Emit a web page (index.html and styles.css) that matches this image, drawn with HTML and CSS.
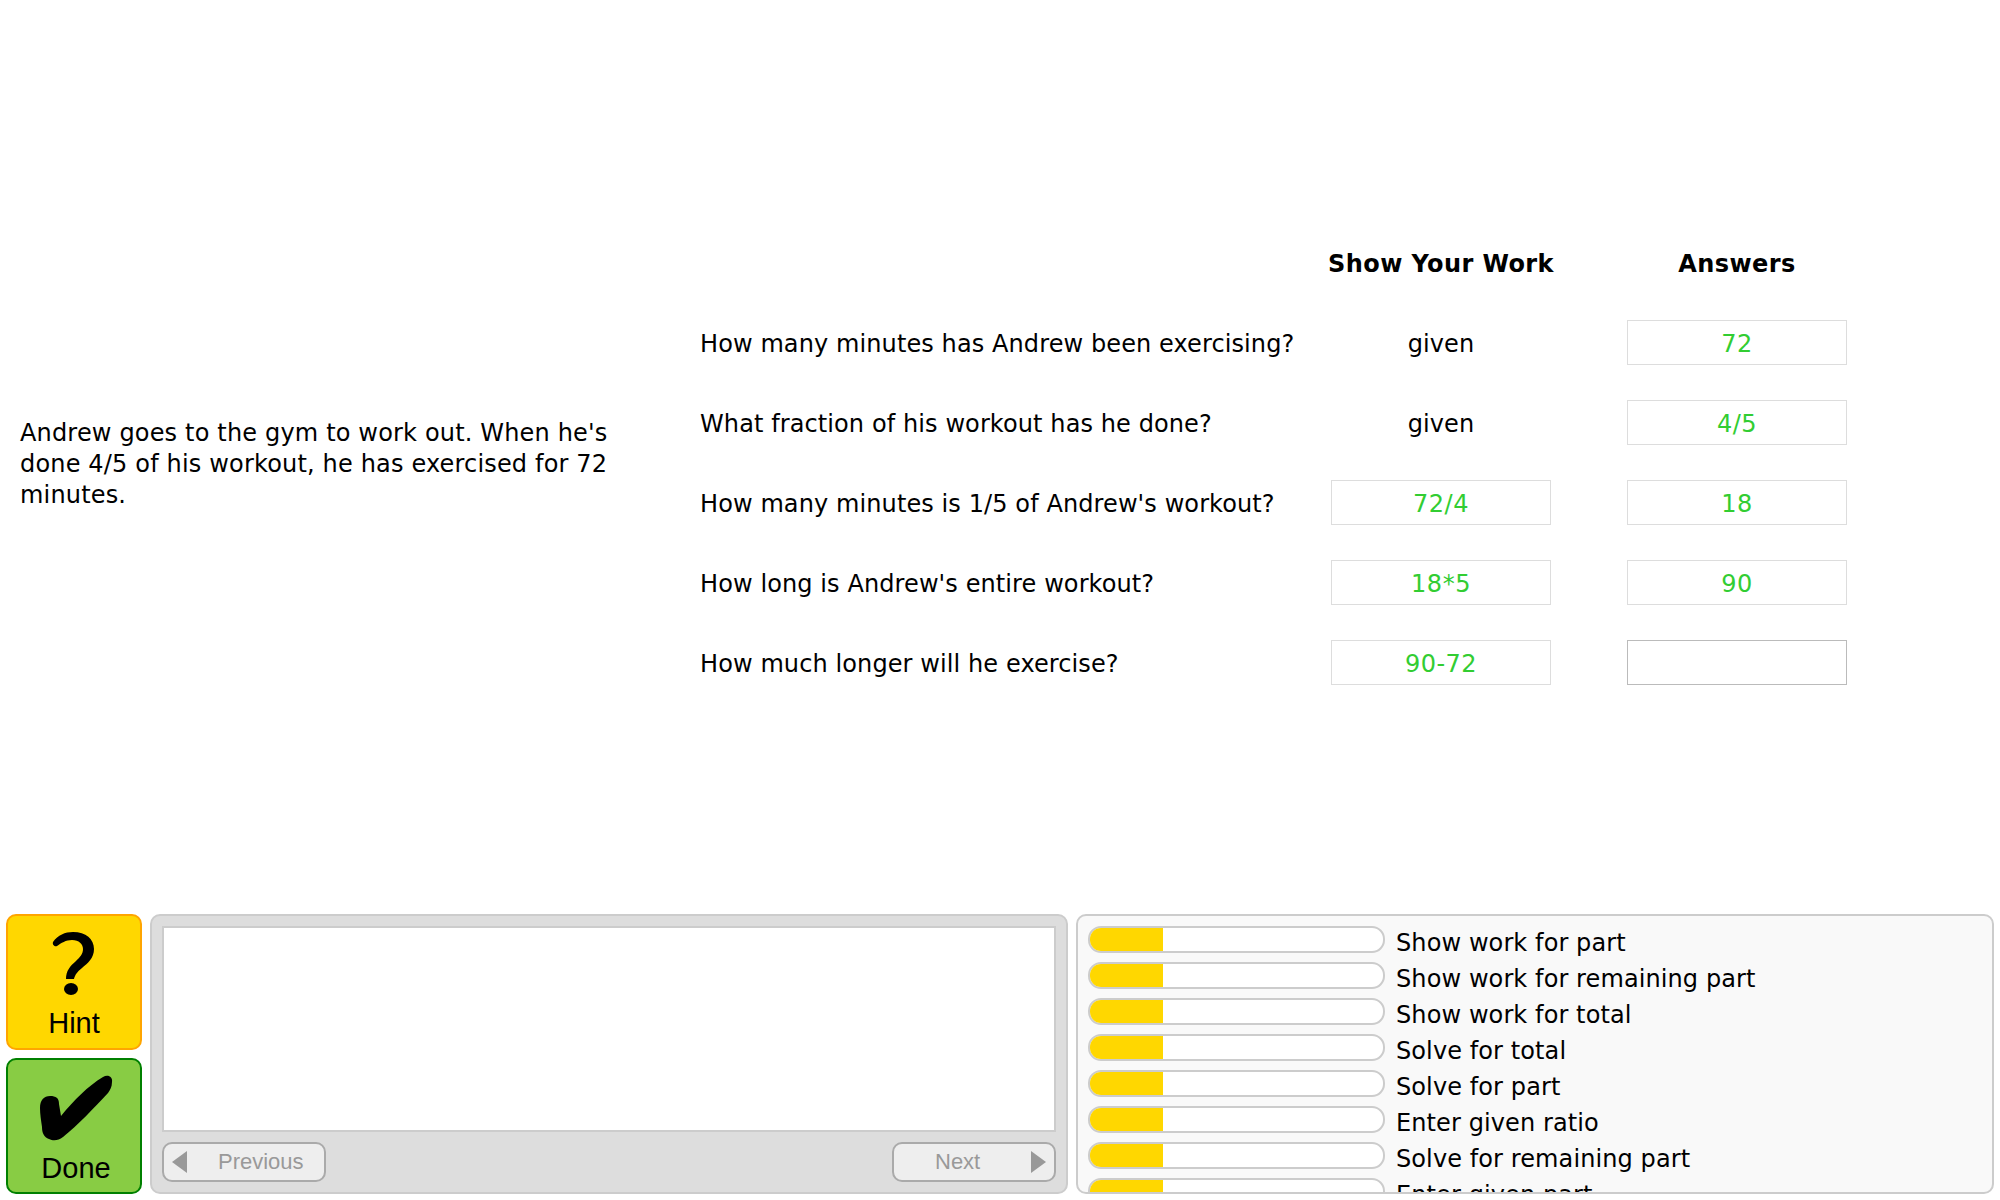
FILE: index.html
```html
<!DOCTYPE html>
<html lang="en">
<head>
    <meta charset="UTF-8">
    <title>Andrew at the gym</title>
    <link rel="stylesheet" href="styles.css">
</head>
<body>
    <div id="container">
        <div id="worksheet">
            <p id="problem">Andrew goes to the gym to work out. When he's done 4/5 of his workout, he has exercised for 72 minutes.</p>
            <div id="steps">
                <div></div>
                <div class="head">Show Your Work</div>
                <div class="head">Answers</div>

                <div class="question">How many minutes has Andrew been exercising?</div>
                <div class="given">given</div>
                <div class="box">72</div>

                <div class="question">What fraction of his workout has he done?</div>
                <div class="given">given</div>
                <div class="box">4/5</div>

                <div class="question">How many minutes is 1/5 of Andrew's workout?</div>
                <div class="box">72/4</div>
                <div class="box">18</div>

                <div class="question">How long is Andrew's entire workout?</div>
                <div class="box">18*5</div>
                <div class="box">90</div>

                <div class="question">How much longer will he exercise?</div>
                <div class="box">90-72</div>
                <div class="box empty"></div>
            </div>
        </div>

        <div id="tools">
            <div id="actions">
                <div class="action hint">
                    <svg width="136" height="90" viewBox="0 0 136 90">
                        <path d="M47 26 C52 19 59 16 67 16 C80 16 88 23 88 33 C88 42 82 47 76 52 C71 56 69 59 68 63 L60 63 C60 55 64 50 70 45 C74 41 77 38 77 33 C77 28 73 24 66 24 C60 24 55 27 51 30 C49 31 46 29 47 26 Z" fill="#000"/>
                        <ellipse cx="65" cy="73" rx="7" ry="6" fill="#000"/>
                    </svg>
                    <span>Hint</span>
                </div>
                <div class="action done">
                    <svg width="136" height="90" viewBox="0 0 136 90">
                        <path d="M34 48 C34 40 38 36 44 36 C50 36 53 38 53 44 L55 56 C68 40 82 26 97 17 C102 14 107 17 106 22 C106 27 104 30 102 33 C88 48 72 65 57 77 C52 81 47 81 43 79 C38 77 36 73 36 67 C35 60 34 54 34 48 Z" fill="#000"/>
                    </svg>
                    <span>Done</span>
                </div>
            </div>

            <div id="messages">
                <div id="messageBox"></div>
                <div id="messageNav">
                    <div class="nav prev">
                        <svg width="15" height="22" viewBox="0 0 15 22"><path d="M15 0 V22 L0 11 Z" fill="#999"/></svg>
                        <span>Previous</span>
                    </div>
                    <div class="nav next">
                        <span>Next</span>
                        <svg width="15" height="22" viewBox="0 0 15 22"><path d="M0 0 V22 L15 11 Z" fill="#999"/></svg>
                    </div>
                </div>
            </div>

            <div id="skills">
                <div class="skill"><div class="bar"><div class="fill"></div></div><span>Show work for part</span></div>
                <div class="skill"><div class="bar"><div class="fill"></div></div><span>Show work for remaining part</span></div>
                <div class="skill"><div class="bar"><div class="fill"></div></div><span>Show work for total</span></div>
                <div class="skill"><div class="bar"><div class="fill"></div></div><span>Solve for total</span></div>
                <div class="skill"><div class="bar"><div class="fill"></div></div><span>Solve for part</span></div>
                <div class="skill"><div class="bar"><div class="fill"></div></div><span>Enter given ratio</span></div>
                <div class="skill"><div class="bar"><div class="fill"></div></div><span>Solve for remaining part</span></div>
                <div class="skill"><div class="bar"><div class="fill"></div></div><span>Enter given part</span></div>
            </div>
        </div>
    </div>
</body>
</html>
```

FILE: styles.css
```css
html, body {
    margin: 0;
    height: 100%;
    background: #fff;
    overflow: hidden;
}
body {
    font-family: "DejaVu Sans", Verdana, sans-serif;
    font-size: 24px;
    letter-spacing: 0.1px;
    color: #000;
}
#container {
    width: 2000px;
    height: 1200px;
    display: flex;
    flex-direction: column;
}
#worksheet {
    height: 914px;
    display: flex;
    box-sizing: border-box;
}
#problem {
    width: 620px;
    margin: 418px 0 0 20px;
    line-height: 31px;
    letter-spacing: 0.17px;
}
#steps {
    margin: 240px 0 0 60px;
    display: grid;
    grid-template-columns: 631px 220px 76px 220px;
    grid-auto-rows: 45px;
    row-gap: 35px;
    align-items: center;
}
/* answers sit in the fourth column, the third is only a gutter */
#steps > :nth-child(3n) {
    grid-column: 4;
}
.head {
    display: flex;
    justify-content: center;
    font-weight: bold;
    letter-spacing: 0.4px;
    white-space: nowrap;
    padding-top: 2px;
}
.question, .given {
    padding-top: 2px;
}
.given {
    text-align: center;
}
.box {
    height: 45px;
    box-sizing: border-box;
    border: 1px solid #ddd;
    line-height: 46px;
    letter-spacing: 0.5px;
    text-align: center;
    color: #32cd32;
}
.empty {
    border-color: #bbb;
}
#tools {
    height: 280px;
    display: flex;
    padding-left: 6px;
}
#actions {
    width: 136px;
    display: flex;
    flex-direction: column;
    gap: 8px;
}
.action {
    height: 136px;
    box-sizing: border-box;
    border: 2px solid;
    border-radius: 10px;
    font-family: "Liberation Sans", Arial, sans-serif;
    font-size: 29px;
    letter-spacing: 0;
    text-align: center;
}
.action svg {
    display: block;
    margin-left: -2px;
}
.action span {
    display: block;
    line-height: 34px;
}
.hint {
    background: #ffd700;
    border-color: #ffa500;
}
.done {
    background: #88cc44;
    border-color: #008000;
}
.done span {
    padding: 1px 0 0 4px;
}
#messages {
    width: 918px;
    height: 280px;
    box-sizing: border-box;
    margin-left: 8px;
    padding: 10px;
    background: #ddd;
    border: 2px solid #ccc;
    border-radius: 10px;
}
#messageBox {
    height: 206px;
    box-sizing: border-box;
    background: #fff;
    border: 2px solid #ccc;
}
#messageNav {
    display: flex;
    justify-content: space-between;
    margin-top: 10px;
}
.nav {
    width: 164px;
    height: 40px;
    box-sizing: border-box;
    display: flex;
    align-items: center;
    background: #eee;
    border: 2px solid #aaa;
    border-radius: 10px;
    font-family: "Liberation Sans", Arial, sans-serif;
    font-size: 22px;
    letter-spacing: 0;
    color: #999;
}
.prev {
    padding-left: 8px;
    gap: 31px;
}
.next {
    justify-content: space-between;
    padding: 0 8px 0 41px;
}
#skills {
    width: 918px;
    height: 280px;
    box-sizing: border-box;
    margin-left: 8px;
    padding: 10px;
    background: #f9f9f9;
    border: 2px solid #ccc;
    border-radius: 10px;
    overflow: hidden;
}
.skill {
    display: flex;
    align-items: flex-start;
    height: 36px;
    white-space: nowrap;
}
.skill span {
    margin-left: 11px;
    line-height: 34px;
}
.bar {
    width: 297px;
    height: 27px;
    box-sizing: border-box;
    background: #fff;
    border: 2px solid #ccc;
    border-radius: 13px;
    overflow: hidden;
}
.fill {
    width: 73px;
    height: 100%;
    background: #ffd700;
}
```
